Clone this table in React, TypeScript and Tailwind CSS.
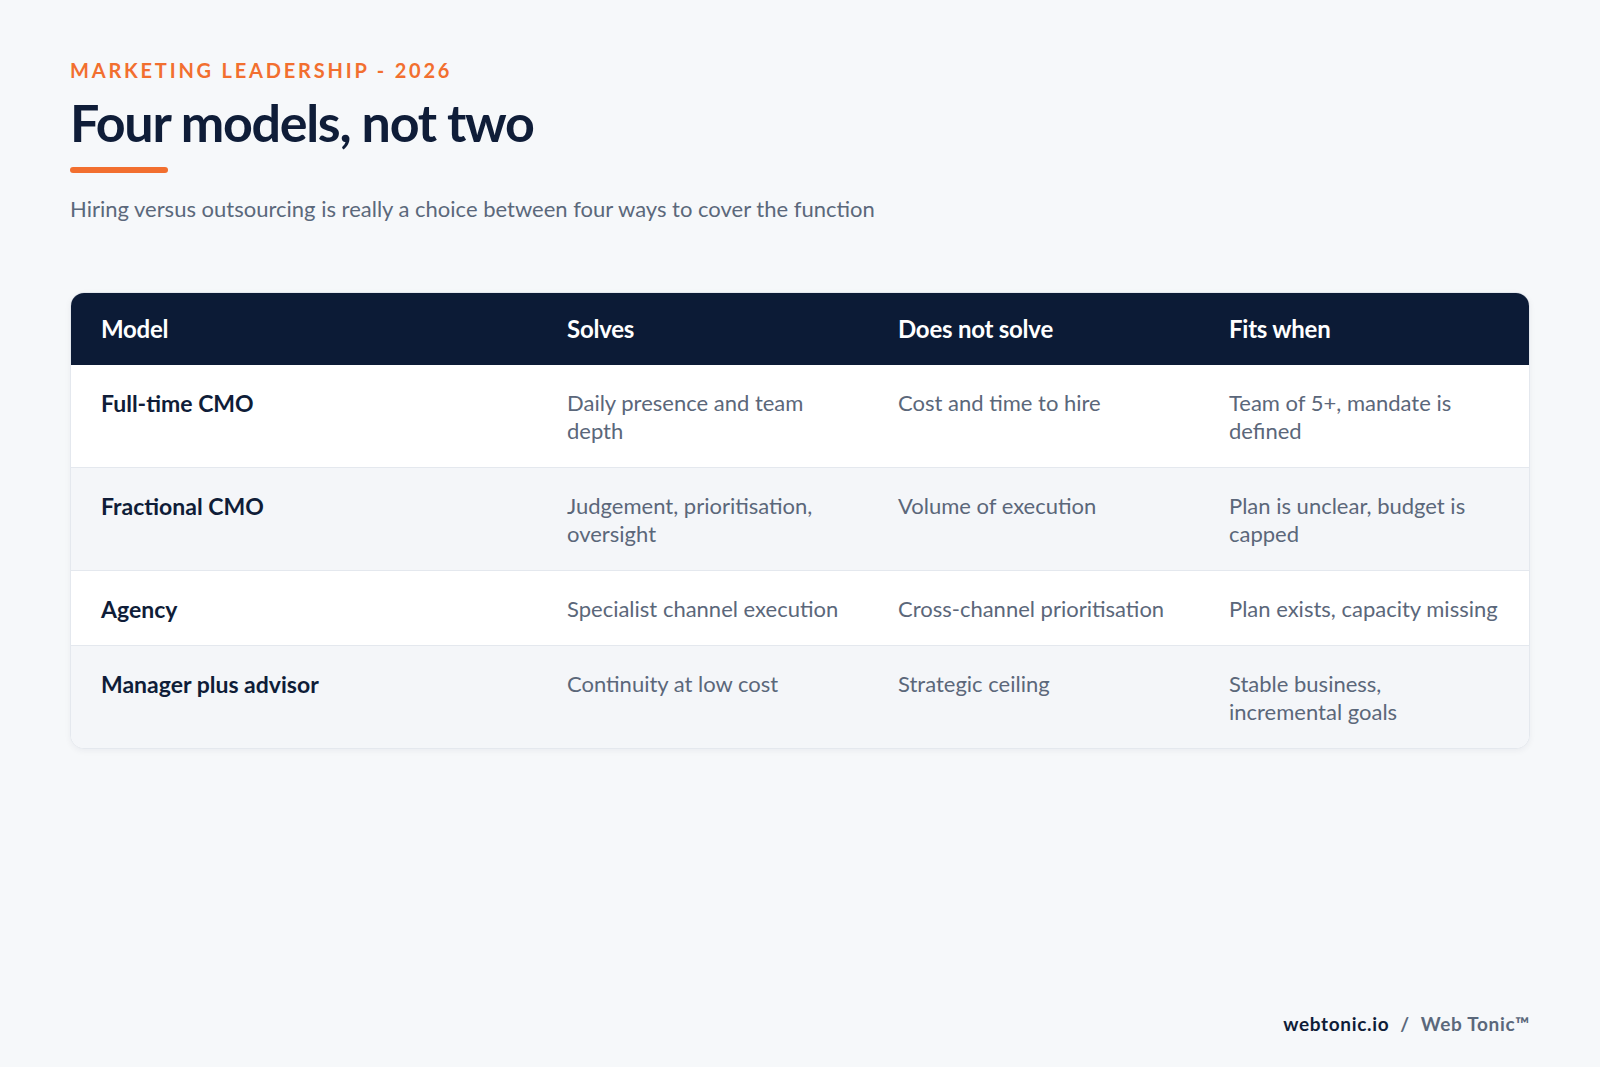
const rows = [
  {
    model: "Full-time CMO",
    solves: "Daily presence and team depth",
    notSolve: "Cost and time to hire",
    fits: "Team of 5+, mandate is defined",
  },
  {
    model: "Fractional CMO",
    solves: "Judgement, prioritisation, oversight",
    notSolve: "Volume of execution",
    fits: "Plan is unclear, budget is capped",
  },
  {
    model: "Agency",
    solves: "Specialist channel execution",
    notSolve: "Cross-channel prioritisation",
    fits: "Plan exists, capacity missing",
  },
  {
    model: "Manager plus advisor",
    solves: "Continuity at low cost",
    notSolve: "Strategic ceiling",
    fits: "Stable business, incremental goals",
  },
];

const cols = "grid grid-cols-[466px_331px_331px_1fr]";

export default function App() {
  return (
    <div className="flex h-[1067px] w-[1600px] flex-col bg-[#f6f8fa] px-[70px] pt-[60px] pb-[29px] font-['Lato','Liberation_Sans',sans-serif]">
      {/* Heading */}
      <p className="text-[20px] font-bold uppercase leading-none tracking-[0.14em] text-[#f26f2f]">
        Marketing Leadership - 2026
      </p>
      <h1 className="mt-[16px] text-[52px] font-bold leading-none tracking-[-0.025em] text-[#0f1d38]">
        Four models, not two
      </h1>
      <div className="mt-[19px] h-[6px] w-[98px] rounded-full bg-[#f26f2f]" />
      <p className="mt-[25px] text-[22px] leading-none text-[#5b687b]">
        Hiring versus outsourcing is really a choice between four ways to cover the function
      </p>

      {/* Table */}
      <div className="mt-[72px] overflow-hidden rounded-[14px] border border-[#e4e8ee] bg-white shadow-[0_2px_6px_rgba(15,29,56,0.05)]">
        <div className={`${cols} h-[72px] items-center bg-[#0c1b36] text-[24px] font-bold tracking-[-0.01em] text-white`}>
          <div className="px-[30px]">Model</div>
          <div className="px-[30px]">Solves</div>
          <div className="px-[30px]">Does not solve</div>
          <div className="px-[30px]">Fits when</div>
        </div>
        {rows.map((r, i) => (
          <div
            key={r.model}
            className={`${cols} pt-[24px] pb-[22px] text-[22px] leading-[28px] ${
              i % 2 === 1 ? "bg-[#f4f6f9]" : "bg-white"
            } ${i > 0 ? "border-t border-[#e4e8ee]" : ""}`}
          >
            <div className="px-[30px] text-[23px] font-bold text-[#0f1d38]">{r.model}</div>
            <div className="pl-[30px] pr-[20px] text-[#5b677a]">{r.solves}</div>
            <div className="pl-[30px] pr-[20px] text-[#5b677a]">{r.notSolve}</div>
            <div className="px-[30px] text-[#5b677a]">{r.fits}</div>
          </div>
        ))}
      </div>

      {/* Footer */}
      <div className="mt-auto flex justify-end text-[19px] font-bold tracking-[0.035em]">
        <span className="text-[#0f1d38]">webtonic.io</span>
        <span className="mx-[11px] text-[#5b687b]">/</span>
        <span className="text-[#5b687b]">Web Tonic™</span>
      </div>
    </div>
  );
}
